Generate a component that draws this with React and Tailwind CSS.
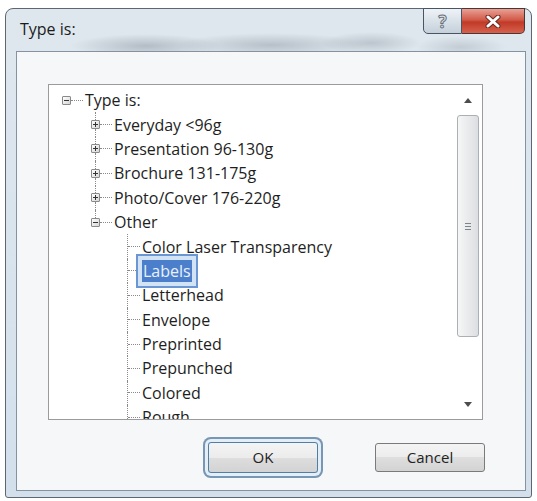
import React from "react";

const font = { fontFamily: "'Open Sans', 'Liberation Sans', sans-serif" };

const Expander = ({ open }) => (
  <div className="relative w-[9px] h-[9px] shrink-0 border border-[#8a8a8a] rounded-[1px] bg-gradient-to-br from-white to-[#d6d6d6] flex items-center justify-center">
    <div className="w-[5px] h-px bg-[#333]" />
    {!open && <div className="absolute w-px h-[5px] bg-[#333]" />}
  </div>
);

const Dash = () => <div className="w-[12px] border-t border-dotted border-[#8a8a8a]" />;

const RootRow = ({ label }) => (
  <div className="flex items-center h-[24.4px] pl-[13px]">
    <Expander open />
    <Dash />
    <span className="ml-[2px]">{label}</span>
  </div>
);

const BranchRow = ({ label, open, last }) => (
  <div className="flex items-center h-[24.4px] pl-[42px]">
    <div className="self-stretch w-[9px] flex flex-col items-center">
      <div className="w-px flex-1 border-l border-dotted border-[#8a8a8a]" />
      <Expander open={open} />
      <div className={"w-px flex-1 " + (last ? "" : "border-l border-dotted border-[#8a8a8a]")} />
    </div>
    <Dash />
    <span className="ml-[2px] whitespace-nowrap">{label}</span>
  </div>
);

const LeafRow = ({ label, selected }) => (
  <div className="flex items-center h-[24.4px] pl-[78px]">
    <div className="self-stretch border-l border-dotted border-[#8a8a8a] flex items-center">
      <Dash />
    </div>
    {selected ? (
      <span className="ml-[2px] px-px h-[22px] leading-[22px] bg-[#4c7fcb] text-[#e9f1fb] shadow-[0_0_0_4px_#d3e3f6,0_0_0_6px_#6a97d4]">
        {label}
      </span>
    ) : (
      <span className="ml-[2px] whitespace-nowrap">{label}</span>
    )}
  </div>
);

const Arrow = ({ down }) => (
  <svg width="8" height="5" viewBox="0 0 8 5">
    <polygon points={down ? "0,0 8,0 4,5" : "0,5 8,5 4,0"} fill="#4d4d4d" />
  </svg>
);

const Scrollbar = () => (
  <div className="w-[25px] h-full flex flex-col items-start">
    <div className="h-[30px] w-[22px] flex items-center justify-center">
      <Arrow />
    </div>
    <div className="h-[222px] w-[22px] rounded-[3px] border border-[#aab0b6] bg-gradient-to-r from-[#f6f6f6] to-[#dcdfe2] flex flex-col items-center justify-center gap-[2px]">
      <div className="w-[6px] h-px bg-[#7d848a]" />
      <div className="w-[6px] h-px bg-[#7d848a]" />
      <div className="w-[6px] h-px bg-[#7d848a]" />
    </div>
    <div className="flex-1" />
    <div className="h-[30px] w-[22px] flex items-center justify-center">
      <Arrow down />
    </div>
  </div>
);

const WinButton = ({ children, focused }) => (
  <div
    className={
      "w-[110px] flex items-center justify-center rounded-[3px] border text-[15px] text-[#222] bg-[linear-gradient(#f4f4f4,#ececec_50%,#dedede_50%,#d3d3d3)] " +
      (focused
        ? "h-[31px] border-[#4f7ea8] shadow-[0_0_0_3px_#e4eef7,0_0_0_5px_#7897b4]"
        : "h-[29px] mt-px border-[#7a7a7a]")
    }
  >
    {children}
  </div>
);

export default function App() {
  return (
    <div className="w-[537px] h-[501px] bg-white pt-[8px] pl-[5px]" style={font}>
      <div className="w-[527px] h-[490px] rounded-t-[8px] rounded-b-[3px] border border-[#5c6772] bg-gradient-to-b from-[#dfe7ee] to-[#d3e0ec] flex flex-col pl-[10px] pr-[5px] pb-[6px]">
        {/* title bar */}
        <div className="h-[42px] -ml-[10px] -mr-[5px] flex items-start justify-between bg-[radial-gradient(75px_12px_at_140px_37px,rgba(100,110,120,0.35),transparent),radial-gradient(95px_12px_at_265px_36px,rgba(100,110,120,0.32),transparent),radial-gradient(50px_11px_at_365px_34px,rgba(100,110,120,0.28),transparent),radial-gradient(45px_11px_at_455px_38px,rgba(100,110,120,0.22),transparent)]">
          <div className="pl-[14px] pt-[8px] text-[16px] text-[#1b1b1b]">Type is:</div>
          <div className="flex -mt-px mr-[6px]">
            <div className="w-[39px] h-[26px] border border-[#4a5562] rounded-bl-[5px] bg-gradient-to-b from-[#eef3f7] to-[#c5d0da] flex items-center justify-center">
              <span className="text-[17px] font-bold text-[#dfe5ea] leading-none [-webkit-text-stroke:1px_#66717c]">?</span>
            </div>
            <div className="w-[63px] h-[26px] border border-l-0 border-[#4a3632] rounded-br-[5px] bg-[linear-gradient(#e8a196,#d25a48_45%,#c13a28_55%,#d6624d)] flex items-center justify-center">
              <svg width="16" height="13" viewBox="0 0 16 13">
                <path d="M3 2 L13 11 M13 2 L3 11" stroke="#6a2a20" strokeWidth="5" strokeLinecap="round" />
                <path d="M3 2 L13 11 M13 2 L3 11" stroke="#ffffff" strokeWidth="3" strokeLinecap="round" />
              </svg>
            </div>
          </div>
        </div>

        {/* client area */}
        <div className="flex-1 border border-[#8593a1] bg-[#f5f7f9] text-[#1e1e1e]">
          <div className="ml-[31px] mt-[32px] w-[435px] h-[336px] border border-[#9b9b9b] bg-white flex overflow-hidden text-[16px]">
            <div className="flex-1 pt-[3px] overflow-hidden">
              <RootRow label="Type is:" />
              <BranchRow label="Everyday <96g" />
              <BranchRow label="Presentation 96-130g" />
              <BranchRow label="Brochure 131-175g" />
              <BranchRow label="Photo/Cover 176-220g" />
              <BranchRow label="Other" open last />
              <LeafRow label="Color Laser Transparency" />
              <LeafRow label="Labels" selected />
              <LeafRow label="Letterhead" />
              <LeafRow label="Envelope" />
              <LeafRow label="Preprinted" />
              <LeafRow label="Prepunched" />
              <LeafRow label="Colored" />
              <LeafRow label="Rough" />
            </div>
            <Scrollbar />
          </div>
          <div className="flex items-start mt-[22px]">
            <div className="ml-[191px]">
              <WinButton focused>OK</WinButton>
            </div>
            <div className="ml-[57px]">
              <WinButton>Cancel</WinButton>
            </div>
          </div>
        </div>
      </div>
    </div>
  );
}
